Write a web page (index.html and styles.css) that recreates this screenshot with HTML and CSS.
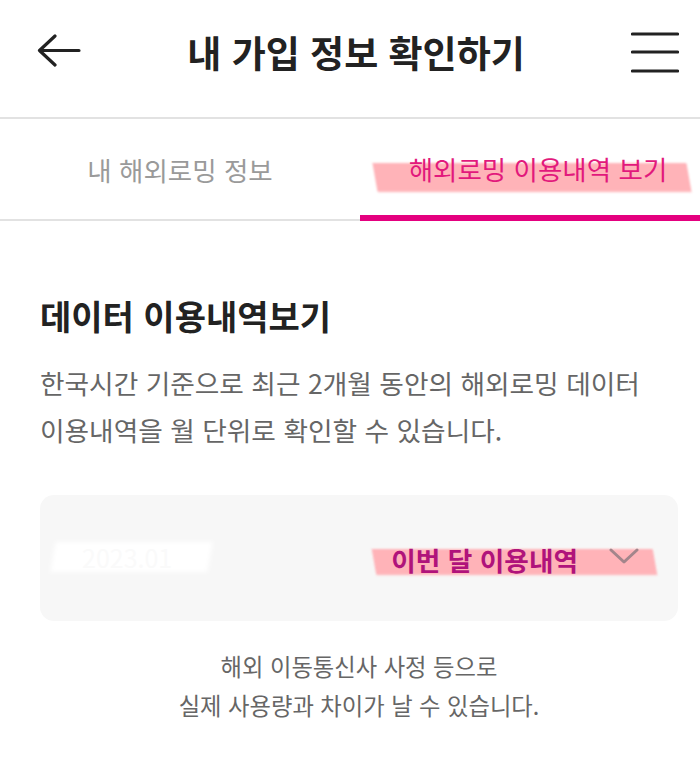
FILE: index.html
```html
<!DOCTYPE html>
<html lang="ko">
<head>
    <meta charset="UTF-8">
    <meta name="viewport" content="width=device-width, initial-scale=1.0">
    <title>내 가입 정보 확인하기</title>
    <link rel="stylesheet" href="styles.css">
</head>
<body>

<div class="topbar">
    <svg class="icon-back" width="44" height="34" viewBox="0 0 44 34">
        <path d="M42 16.5 H3 M18 2 L2.5 16.5 L18 31" fill="none" stroke="#222" stroke-width="3.2" stroke-linecap="round" stroke-linejoin="round"/>
    </svg>
    <div class="title">내 가입 정보 확인하기</div>
    <svg class="icon-menu" width="48" height="42" viewBox="0 0 48 42">
        <path d="M1.5 3 H46.5 M1.5 21 H46.5 M1.5 40 H46.5" fill="none" stroke="#222" stroke-width="3.2" stroke-linecap="round"/>
    </svg>
</div>

<div class="tabs">
    <div class="tab">내 해외로밍 정보</div>
    <div class="tab active"><span class="marked">해외로밍 이용내역 보기</span></div>
</div>

<div class="section">
    <div class="heading">데이터 이용내역보기</div>
    <div class="desc">한국시간 기준으로 최근 2개월 동안의 해외로밍 데이터<br>이용내역을 월 단위로 확인할 수 있습니다.</div>

    <div class="card">
        <div class="month"><span>2023.01</span></div>
        <div class="picker">
            <span class="picker-label">이번 달 이용내역</span>
            <svg class="chevron" width="30" height="16" viewBox="0 0 30 16">
                <path d="M2 2 L15 14 L28 2" fill="none" stroke="#a3858b" stroke-width="3" stroke-linecap="round" stroke-linejoin="round"/>
            </svg>
        </div>
    </div>

    <div class="note">해외 이동통신사 사정 등으로<br>실제 사용량과 차이가 날 수 있습니다.</div>
</div>

</body>
</html>
```

FILE: styles.css
```css
body {
    margin: 0;
    background-color: #ffffff;
    font-family: "Noto Sans CJK KR", "Noto Sans", sans-serif;
    color: #222;
}
.topbar {
    height: 104px;
    display: flex;
    align-items: center;
    justify-content: space-between;
    padding: 0 21px 0 37px;
}
.icon-back {
    display: block;
    margin-top: -2px;
}
.icon-menu {
    display: block;
}
.title {
    flex: 1;
    text-align: center;
    font-size: 37px;
    font-weight: bold;
    line-height: 48px;
    color: #222;
}
.tabs {
    margin-top: 13px;
    display: grid;
    grid-template-columns: 360px 1fr;
    border-top: 2px solid #e2e2e2;
    border-bottom: 2px solid #e2e2e2;
}
.tab {
    height: 100px;
    display: flex;
    align-items: center;
    justify-content: center;
    font-size: 26.5px;
    color: #9a9a9a;
    position: relative;
}
.tab.active {
    color: #e2197c;
    padding-left: 16px;
}
.tab.active::after {
    content: "";
    position: absolute;
    left: 0;
    right: 0;
    bottom: -2px;
    height: 6px;
    background-color: #e4007f;
}
.marked {
    position: relative;
    z-index: 0;
    line-height: 36px;
}
.marked::before {
    content: "";
    position: absolute;
    z-index: -1;
    left: -34px;
    right: -21px;
    top: 12px;
    height: 29px;
    background-color: #ffb3b8;
    transform: skewX(10deg);
    filter: blur(1.2px);
}
.section {
    padding: 0 22px 0 40px;
}
.heading {
    margin-top: 75px;
    font-size: 34px;
    font-weight: bold;
    line-height: 40px;
    color: #222;
}
.desc {
    margin-top: 23px;
    font-size: 26.7px;
    line-height: 47px;
    color: #666;
}
.card {
    margin-top: 42px;
    height: 126px;
    border-radius: 14px;
    background-color: #f7f7f7;
    display: flex;
    align-items: center;
    justify-content: space-between;
    padding: 0 39px 0 13px;
}
.month {
    position: relative;
    z-index: 0;
    width: 157px;
    height: 30px;
    display: flex;
    align-items: center;
    padding-left: 29px;
    box-sizing: border-box;
    font-size: 25px;
    color: #fafafa;
    text-shadow: 0 0 2px #ffffff;
    margin-top: -2px;
}
.month::before {
    content: "";
    position: absolute;
    z-index: -1;
    inset: 0;
    background-color: #ffffff;
    transform: skewX(-10deg);
    filter: blur(2px);
}
.picker {
    position: relative;
    z-index: 0;
    display: flex;
    align-items: center;
    gap: 31px;
    margin-top: 4px;
}
.picker::before {
    content: "";
    position: absolute;
    z-index: -1;
    left: -17px;
    right: -16px;
    top: 7px;
    height: 26px;
    background-color: #ffb3b8;
    transform: skewX(10deg);
    filter: blur(1.2px);
}
.picker-label {
    font-size: 26.7px;
    font-weight: bold;
    line-height: 36px;
    color: #b0137b;
}
.chevron {
    display: block;
    margin-top: -8px;
}
.note {
    margin-top: 26px;
    text-align: center;
    font-size: 23.3px;
    line-height: 39px;
    color: #666;
}
```
